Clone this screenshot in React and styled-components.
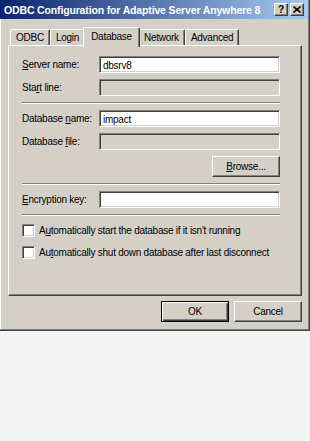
import React from 'react'
import styled, { createGlobalStyle } from 'styled-components'

const Global = createGlobalStyle`
  body {
    margin: 0;
    background: #f5f5f5;
    font-family: "Liberation Sans", Arial, sans-serif;
    font-size: 10px;
    letter-spacing: -0.25px;
    color: #000;
  }
`

const Dialog = styled.div`
  width: 310px;
  height: 331px;
  box-sizing: border-box;
  background: #d4d0c8;
  border-right: 1px solid #404040;
  border-bottom: 1px solid #404040;
  box-shadow: inset -1px -1px #808080, inset 1px 0 #fff;
  display: flex;
  flex-direction: column;
`

const TitleBar = styled.div`
  height: 19px;
  margin-right: 1px;
  display: flex;
  align-items: center;
  padding: 0 4px 0 4px;
  background: linear-gradient(to right, #0a246a, #a6caf0);
  color: #fff;
  font-weight: bold;
  font-size: 10.5px;
  letter-spacing: -0.15px;
`

const Title = styled.span`
  flex: 1;
  white-space: nowrap;
`

const CapButton = styled.div`
  width: 14px;
  height: 13px;
  box-sizing: border-box;
  margin-left: ${p => (p.$gap ? '2px' : '0')};
  background: #d4d0c8;
  border: 1px solid;
  border-color: #fff #404040 #404040 #fff;
  box-shadow: inset -1px -1px #808080;
  display: flex;
  align-items: center;
  justify-content: center;
  color: #000;
  font-size: 10px;
  font-weight: bold;
  line-height: 1;
`

const Body = styled.div`
  flex: 1;
  display: flex;
  flex-direction: column;
  padding: 8px 7px 0 8px;
`

const TabRow = styled.div`
  display: flex;
  align-items: flex-end;
  height: 18px;
  padding-left: 2px;
`

const Tab = styled.div`
  position: relative;
  z-index: ${p => (p.$active ? 1 : 0)};
  height: ${p => (p.$active ? '20px' : '16px')};
  margin: ${p => (p.$active ? '0 -2px -2px -2px' : '0')};
  padding: 0 ${p => (p.$active ? '7px' : '5px')};
  padding-top: ${p => (p.$active ? '3px' : '0')};
  box-sizing: border-box;
  display: flex;
  align-items: ${p => (p.$active ? 'flex-start' : 'center')};
  background: #d4d0c8;
  border-top: 1px solid #fff;
  border-left: 1px solid #fff;
  border-right: 1px solid #404040;
  border-radius: 2px 2px 0 0;
  box-shadow: inset -1px 0 #808080;
  white-space: nowrap;
`

const Panel = styled.div`
  height: 251px;
  box-sizing: border-box;
  border: 1px solid;
  border-color: #fff #404040 #404040 #fff;
  box-shadow: inset -1px -1px #808080;
  padding: 10px 0 0 13px;
  display: flex;
  flex-direction: column;
  gap: 6px;
`

const FieldRow = styled.div`
  display: flex;
  align-items: center;
  height: 17px;
`

const Label = styled.label`
  width: 77px;
  white-space: nowrap;
`

const Input = styled.div`
  width: 181px;
  height: 17px;
  box-sizing: border-box;
  background: ${p => (p.$disabled ? '#d4d0c8' : '#fff')};
  border: 1px solid;
  border-color: #808080 #fff #fff #808080;
  box-shadow: inset 1px 1px #404040, inset -1px -1px #d4d0c8;
  padding: 1px 3px 0;
  display: flex;
  align-items: center;
`

const Separator = styled.div`
  width: 258px;
  height: 2px;
  box-sizing: border-box;
  border-top: 1px solid #808080;
  border-bottom: 1px solid #fff;
`

const RightRow = styled.div`
  display: flex;
  justify-content: flex-end;
  width: 258px;
`

const Button = styled.div`
  width: 68px;
  height: 21px;
  box-sizing: border-box;
  display: flex;
  align-items: center;
  justify-content: center;
  background: #d4d0c8;
  border: 1px solid;
  border-color: ${p => (p.$default ? '#000' : '#fff #404040 #404040 #fff')};
  box-shadow: ${p =>
    p.$default
      ? 'inset 1px 1px #fff, inset -1px -1px #404040, inset -2px -2px #808080'
      : 'inset -1px -1px #808080'};
`

const CheckRow = styled.div`
  display: flex;
  align-items: center;
  height: 16px;
  gap: 4px;
  white-space: nowrap;
`

const Box = styled.div`
  width: 13px;
  height: 13px;
  box-sizing: border-box;
  background: #fff;
  border: 1px solid;
  border-color: #808080 #fff #fff #808080;
  box-shadow: inset 1px 1px #404040, inset -1px -1px #d4d0c8;
`

const Footer = styled.div`
  display: flex;
  justify-content: flex-end;
  gap: 5px;
  padding-top: 5px;
`

const U = styled.span`
  text-decoration: underline;
`

const Field = ({ label, value, disabled }) => (
  <FieldRow>
    <Label>{label}</Label>
    <Input $disabled={disabled}>{value}</Input>
  </FieldRow>
)

export default function App() {
  return (
    <>
      <Global />
      <Dialog>
        <TitleBar>
          <Title>ODBC Configuration for Adaptive Server Anywhere 8</Title>
          <CapButton>?</CapButton>
          <CapButton $gap>
            <svg width="8" height="7" viewBox="0 0 8 7">
              <path d="M0.5 0.5 L7.5 6.5 M7.5 0.5 L0.5 6.5" stroke="#000" strokeWidth="1.6" />
            </svg>
          </CapButton>
        </TitleBar>
        <Body>
          <TabRow>
            <Tab>ODBC</Tab>
            <Tab>Login</Tab>
            <Tab $active>Database</Tab>
            <Tab>Network</Tab>
            <Tab>Advanced</Tab>
          </TabRow>
          <Panel>
            <Field label={<><U>S</U>erver name:</>} value="dbsrv8" />
            <Field label={<>Sta<U>r</U>t line:</>} disabled />
            <Separator />
            <Field label={<>Database <U>n</U>ame:</>} value="impact" />
            <Field label={<>Database <U>f</U>ile:</>} disabled />
            <RightRow>
              <Button><span><U>B</U>rowse...</span></Button>
            </RightRow>
            <Separator />
            <Field label={<><U>E</U>ncryption key:</>} />
            <Separator />
            <CheckRow>
              <Box />
              <span>A<U>u</U>tomatically start the database if it isn't running</span>
            </CheckRow>
            <CheckRow>
              <Box />
              <span>Au<U>t</U>omatically shut down database after last disconnect</span>
            </CheckRow>
          </Panel>
          <Footer>
            <Button $default>OK</Button>
            <Button>Cancel</Button>
          </Footer>
        </Body>
      </Dialog>
    </>
  )
}
